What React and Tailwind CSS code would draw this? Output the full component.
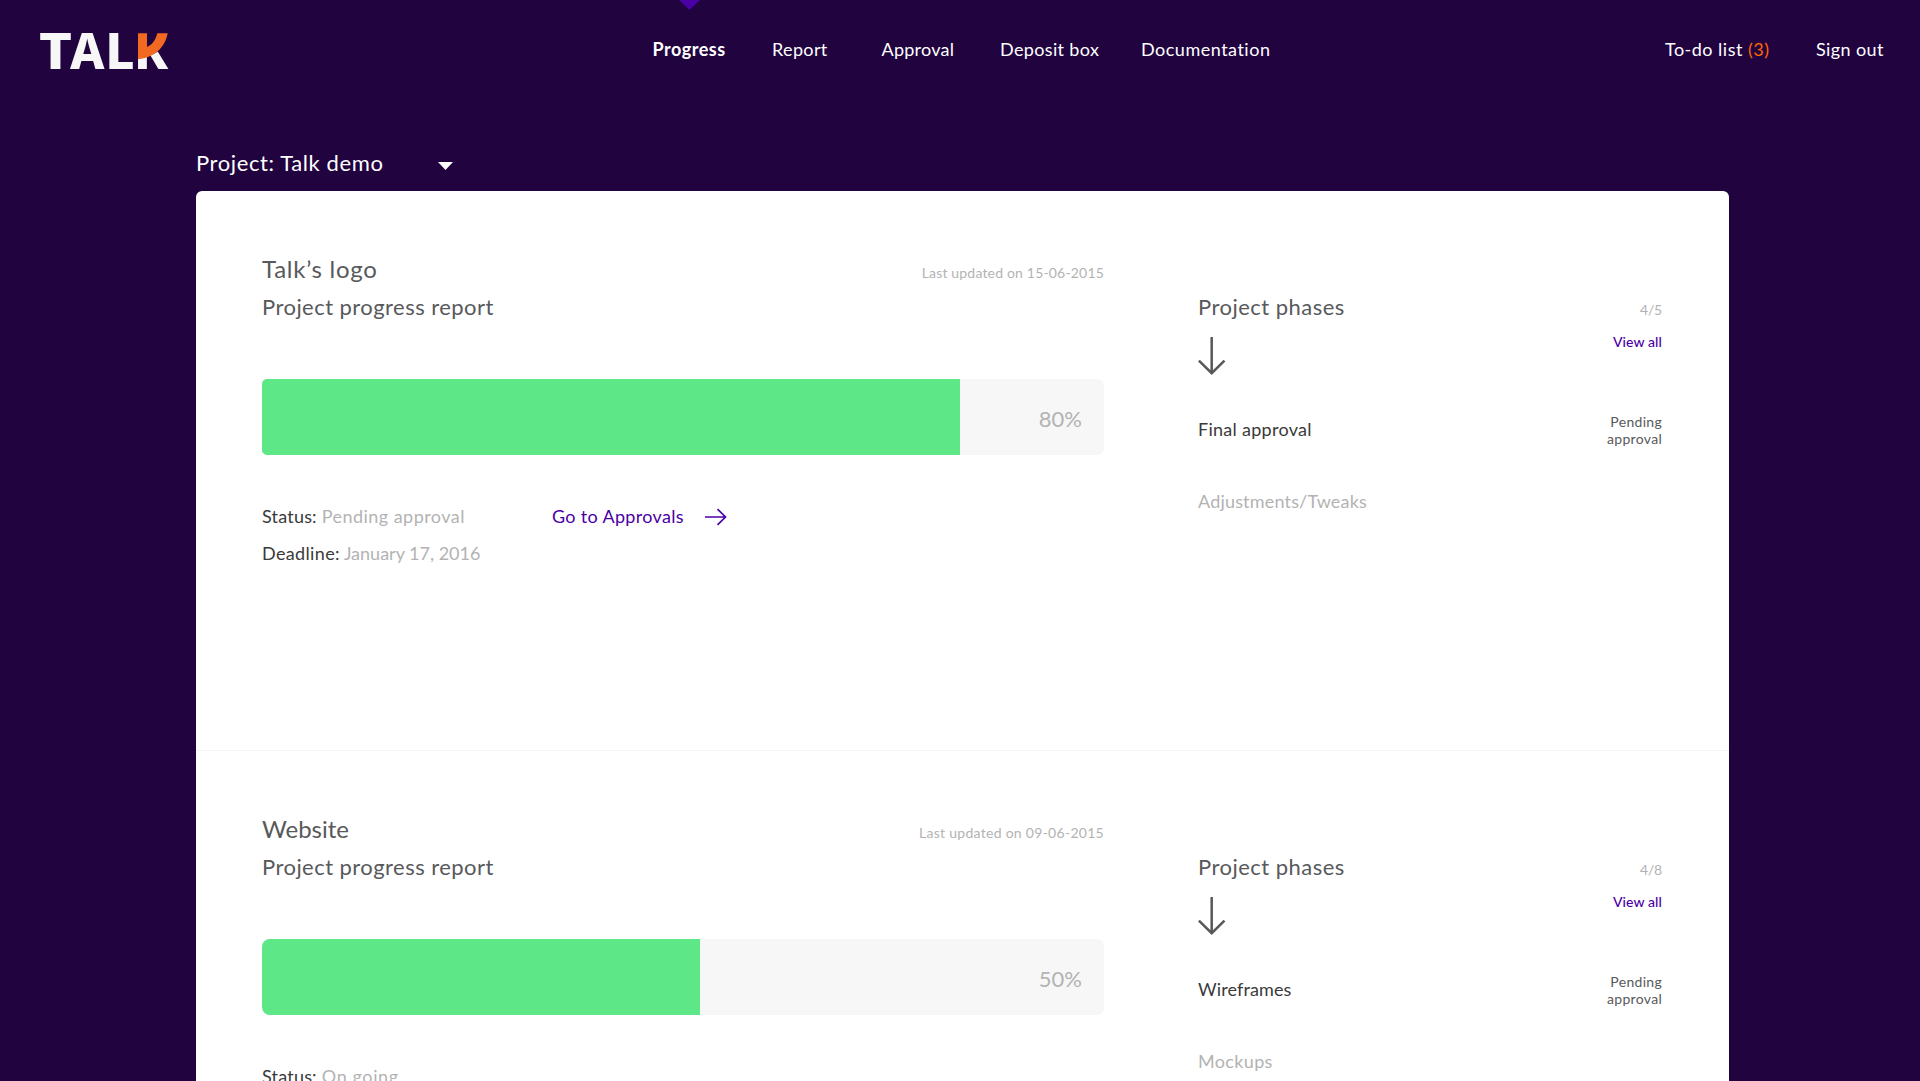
const navItems = [
  { label: "Progress", className: "w-[119.5px] font-bold tracking-[0.5px]" },
  { label: "Report", className: "w-[109.5px] tracking-[0.35px]" },
  { label: "Approval", className: "w-[118.5px] tracking-[0.25px]" },
  { label: "Deposit box", className: "w-[141px] tracking-[0.35px]" },
  { label: "Documentation", className: "tracking-[0.5px]" },
];

const projects = [
  {
    title: "Talk’s logo",
    titleClass: "tracking-[0.75px]",
    updated: "15-06-2015",
    updatedClass: "tracking-[0.18px]",
    percent: 80,
    fillClass: "w-[698px] rounded-l-[5px]",
    status: "Pending approval",
    statusClass: "tracking-[0.45px]",
    deadline: "January 17, 2016",
    action: "Go to Approvals",
    count: "4/5",
    current: "Final approval",
    currentClass: "tracking-[0.28px]",
    next: "Adjustments/Tweaks",
    nextClass: "tracking-[0.18px]",
  },
  {
    title: "Website",
    titleClass: "tracking-[0px]",
    updated: "09-06-2015",
    updatedClass: "tracking-[0.28px]",
    percent: 50,
    fillClass: "w-[437.5px] rounded-l-[8px]",
    status: "On going",
    statusClass: "tracking-[0.6px]",
    count: "4/8",
    current: "Wireframes",
    currentClass: "tracking-[0.12px]",
    next: "Mockups",
    nextClass: "tracking-[0.35px]",
  },
];

function Logo() {
  return (
    <svg className="block" width="134" height="72" viewBox="-2 -18 134 72" aria-label="Talk">
      <defs>
        <clipPath id="below-swoosh">
          <path d="M97 26 Q120 21 124 12 L136 38 H97 Z" />
        </clipPath>
      </defs>
      <g fill="#f7f7f7" fontFamily="Noto Sans, sans-serif" fontWeight="800" fontSize="50">
        <text x="-1" y="36" textLength="33" lengthAdjust="spacingAndGlyphs">T</text>
        <text x="30" y="36" textLength="34.5" lengthAdjust="spacingAndGlyphs">A</text>
        <text x="65.2" y="36" textLength="29.3" lengthAdjust="spacingAndGlyphs">L</text>
        <text x="93.8" y="36" textLength="34.6" lengthAdjust="spacingAndGlyphs" clipPath="url(#below-swoosh)">K</text>
      </g>
      <path
        d="M98 0.3 H107 V14 C112 12 115.5 7.5 117.3 0.3 H127.7 C125 13.5 116 24.5 98 26.3 Z"
        fill="#f26a21"
      />
    </svg>
  );
}

function Header() {
  return (
    <header className="flex h-[98px] items-start">
      <div className="w-[652.5px] shrink-0 pt-[15px] pl-[38px]">
        <Logo />
      </div>
      <nav className="relative flex pt-[35px] text-lg leading-7 text-white">
        <svg className="absolute top-0 left-[26.5px]" width="21" height="10" viewBox="0 0 21 10">
          <path d="M0 0 H21 L10.5 10 Z" fill="#4900a4" />
        </svg>
        {navItems.map((item) => (
          <a key={item.label} className={item.className}>
            {item.label}
          </a>
        ))}
      </nav>
      <div className="ml-auto flex pt-[35px] text-lg leading-7 text-white">
        <a className="w-[151px] tracking-[0.48px]">
          To-do list <span className="text-[#ff6600]">(3)</span>
        </a>
        <a className="w-[104px] tracking-[0.4px]">Sign out</a>
      </div>
    </header>
  );
}

function ProgressReport({ project }) {
  return (
    <div className="w-[842px] pt-[62px]">
      <div className="flex h-8 items-baseline justify-between">
        <h2 className={`text-2xl leading-8 ${project.titleClass}`}>{project.title}</h2>
        <span className={`text-sm leading-8 text-[#b3b3b3] ${project.updatedClass}`}>
          Last updated on {project.updated}
        </span>
      </div>
      <h3 className="mt-1.5 text-[22px] leading-8 tracking-[0.45px]">Project progress report</h3>
      <div className="mt-14 flex h-[76px] items-center rounded-[7px] bg-[#f7f7f7]">
        <div className={`h-full bg-[#5de787] ${project.fillClass}`} />
        <span className="ml-auto pt-0.5 pr-[22px] text-[22px] text-[#b3b3b3]">{project.percent}%</span>
      </div>
      <div className="mt-[43px] flex text-lg leading-[37px] text-[#3a3a3a]">
        <dl className="w-[290px]">
          <div className="flex gap-[5px]">
            <dt className="tracking-[0.2px]">Status:</dt>
            <dd className={`text-[#b3b3b3] ${project.statusClass}`}>{project.status}</dd>
          </div>
          {project.deadline && (
            <div className="flex gap-1">
              <dt className="tracking-[0.35px]">Deadline:</dt>
              <dd className="text-[#b3b3b3]">{project.deadline}</dd>
            </div>
          )}
        </dl>
        {project.action && (
          <a className="flex h-[37px] items-center gap-[21px] text-[#4b00a5]">
            <span className="tracking-[0.33px]">{project.action}</span>
            <svg width="22" height="18" viewBox="0 0 22 18" fill="none" stroke="currentColor" strokeWidth="1.7">
              <path d="M0 9 H20 M12.5 1.2 L20.5 9 L12.5 16.8" />
            </svg>
          </a>
        )}
      </div>
    </div>
  );
}

function Phases({ project }) {
  return (
    <div className="ml-[94px] w-[464px] pt-[100px]">
      <div className="flex h-8 items-baseline justify-between">
        <h3 className="text-[22px] leading-8 tracking-[0.48px]">Project phases</h3>
        <span className="text-sm leading-8 tracking-[-0.2px] text-[#b3b3b3]">{project.count}</span>
      </div>
      <div className="mt-3.5 flex h-[38px] items-start justify-between">
        <svg width="28" height="38" viewBox="0 0 28 38" fill="none" stroke="#58595b" strokeWidth="2.5">
          <path d="M13.7 0 V36 M0.9 23.6 L13.7 36.2 L26.5 23.6" />
        </svg>
        <a className="-mt-[5px] text-sm leading-5 font-medium tracking-[0.1px] text-[#4b00a5]">View all</a>
      </div>
      <div className="mt-[39px] flex h-[34px] items-start justify-between">
        <span className={`text-lg leading-[30px] text-[#3a3a3a] ${project.currentClass}`}>{project.current}</span>
        <span className="-mt-px w-16 text-right text-sm leading-[17px] tracking-[0.3px]">Pending approval</span>
      </div>
      <p className={`mt-[38px] text-lg leading-[30px] text-[#b3b3b3] ${project.nextClass}`}>{project.next}</p>
    </div>
  );
}

export default function App() {
  return (
    <div className="h-[1081px] overflow-hidden bg-[#210340] font-['Lato','Noto_Sans',sans-serif] text-[#58595b]">
      <Header />
      <div className="flex h-[93px] items-start gap-[54.5px] pt-[49px] pl-[196px] text-white">
        <span className="text-[22px] leading-8 tracking-[0.6px]">Project: Talk demo</span>
        <svg className="mt-[15px]" width="15" height="8" viewBox="0 0 15 8">
          <path d="M0 0 H15 L7.5 8 Z" fill="#fff" />
        </svg>
      </div>
      <main className="ml-[196px] w-[1532.6px] rounded-t-[6px] bg-white">
        {projects.map((project) => (
          <section key={project.title} className="flex h-[560px] border-b border-[#f3f3f3] pl-[66px]">
            <ProgressReport project={project} />
            <Phases project={project} />
          </section>
        ))}
      </main>
    </div>
  );
}
